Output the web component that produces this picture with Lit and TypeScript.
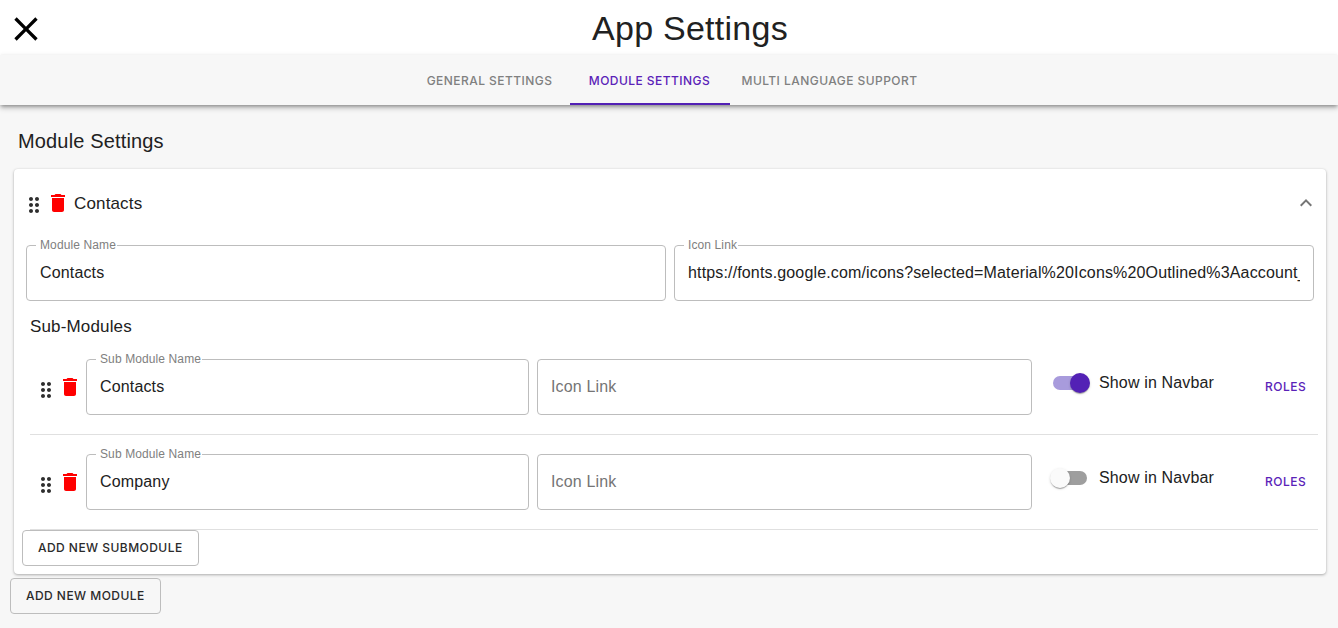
import {html, css, LitElement} from 'lit';
import {customElement, property} from 'lit/decorators.js';

const DRAG = 'M11 18c0 1.1-.9 2-2 2s-2-.9-2-2 .9-2 2-2 2 .9 2 2zm-2-8c-1.1 0-2 .9-2 2s.9 2 2 2 2-.9 2-2-.9-2-2-2zm0-6c-1.1 0-2 .9-2 2s.9 2 2 2 2-.9 2-2-.9-2-2-2zm6 4c1.1 0 2-.9 2-2s-.9-2-2-2-2 .9-2 2 .9 2 2 2zm0 2c-1.1 0-2 .9-2 2s.9 2 2 2 2-.9 2-2-.9-2-2-2zm0 6c-1.1 0-2 .9-2 2s.9 2 2 2 2-.9 2-2-.9-2-2-2z';
const TRASH = 'M6 19c0 1.1.9 2 2 2h8c1.1 0 2-.9 2-2V7H6v12zM19 4h-3.5l-1-1h-5l-1 1H5v2h14V4z';

const icon = (d: string, cls: string) => html`
  <svg class=${cls} viewBox="0 0 24 24" width="24" height="24"><path d=${d}></path></svg>
`;

@customElement('text-field')
export class TextField extends LitElement {
  @property() label = '';
  @property() value = '';
  @property() placeholder = '';

  static styles = css`
    :host {
      display: block;
      position: relative;
      height: 56px;
      box-sizing: border-box;
      border: 1px solid #bdbdbd;
      border-radius: 4px;
      background: #fff;
    }

    input {
      display: block;
      width: 100%;
      height: 100%;
      box-sizing: border-box;
      padding: 0 13px;
      border: none;
      outline: none;
      background: transparent;
      font: 16px 'Liberation Sans', Arial, sans-serif;
      letter-spacing: .15px;
      color: #212121;
    }

    input::placeholder {
      color: #757575;
      opacity: 1;
    }

    label {
      position: absolute;
      left: 9px;
      top: -8px;
      padding: 0 1px 0 4px;
      background: #fff;
      font: 12px/14px 'Liberation Sans', Arial, sans-serif;
      letter-spacing: .11px;
      color: #808080;
    }
  `;

  render() {
    return html`
      ${this.label ? html`<label>${this.label}</label>` : ''}
      <input .value=${this.value} placeholder=${this.placeholder} />
    `;
  }
}

@customElement('app-root')
export class AppRoot extends LitElement {
  static styles = css`
    :host {
      display: block;
      height: 628px;
      overflow: hidden;
      background: #f7f7f7;
      font-family: 'Liberation Sans', Arial, sans-serif;
      color: #212121;
    }

    .top {
      display: flex;
      align-items: center;
      height: 55px;
      padding: 3px 0 0 6px;
      box-sizing: border-box;
      background: #fff;
    }

    .top svg {
      flex: none;
      width: 40px;
      height: 40px;
    }

    .top h1 {
      flex: 1;
      margin: -3px 0 0;
      padding-right: 4px;
      text-align: center;
      font-size: 34px;
      font-weight: 400;
      letter-spacing: .25px;
      line-height: 40px;
    }

    .tabs {
      position: relative;
      display: flex;
      justify-content: center;
      height: 50px;
      padding-left: 1px;
      box-sizing: border-box;
      background: #f7f7f7;
      box-shadow: 0 2px 4px -1px rgba(0,0,0,.4), 0 4px 5px 0 rgba(0,0,0,.14), 0 -1px 4px 0 rgba(0,0,0,.04);
    }

    .tab {
      min-width: 160px;
      padding: 2px 12px 0;
      box-sizing: border-box;
      display: flex;
      align-items: center;
      justify-content: center;
      border-bottom: 2px solid transparent;
      font: 500 12px Inter, sans-serif;
      letter-spacing: .45px;
      color: #808080;
    }

    .tab.active {
      color: #5a22b8;
      border-bottom-color: #5321b5;
    }

    .content {
      padding: 0 12px 0 14px;
    }

    h2 {
      margin: 0;
      padding: 23px 0 15px 4px;
      font-size: 20px;
      font-weight: 400;
      letter-spacing: .15px;
      line-height: 26px;
    }

    .card {
      background: #fff;
      border-radius: 4px;
      box-shadow: 0 1px 3px rgba(0,0,0,.3), 0 0 2px rgba(0,0,0,.05);
      height: 405px;
      padding: 0 8px;
      box-sizing: border-box;
    }

    .card-head {
      display: flex;
      align-items: center;
      height: 68px;
      font-size: 17px;
      letter-spacing: .15px;
    }

    .drag {
      flex: none;
      fill: #2e2e2e;
      margin-top: 4px;
    }

    .sub-row .drag {
      margin-top: 6px;
    }

    .trash {
      flex: none;
      fill: #f00;
    }

    .name {
      flex: 1;
      margin: 1px 0 0 4px;
    }

    .chevron {
      fill: #757575;
    }

    .fields {
      display: grid;
      grid-template-columns: 1fr 1fr;
      gap: 8px;
      margin: 8px 4px 0;
    }

    h3 {
      margin: 0;
      padding: 16px 0 22px 8px;
      font-size: 17px;
      font-weight: 400;
      letter-spacing: .15px;
      line-height: 20px;
    }

    .sub-row {
      display: flex;
      align-items: center;
      height: 56px;
      margin-left: 12px;
    }

    .sub-row text-field:nth-of-type(1) {
      flex: none;
      width: 443px;
      margin-left: 4px;
    }

    .sub-row text-field:nth-of-type(2) {
      flex: none;
      width: 495px;
      margin-left: 8px;
    }

    .divider {
      height: 1px;
      margin: 19px 0 19px 8px;
      background: #e0e0e0;
    }

    .divider.last {
      margin-bottom: 0;
    }

    .switch {
      position: relative;
      flex: none;
      width: 34px;
      height: 14px;
      margin: -8px 0 0 21px;
      border-radius: 7px;
      background: #9e9e9e;
    }

    .switch::after {
      content: '';
      position: absolute;
      left: -3px;
      top: -3px;
      width: 20px;
      height: 20px;
      border-radius: 50%;
      background: #fafafa;
      box-shadow: 0 2px 1px -1px rgba(0,0,0,.2), 0 1px 1px 0 rgba(0,0,0,.14), 0 1px 3px 0 rgba(0,0,0,.12);
    }

    .switch.on {
      background: #a89bdc;
    }

    .switch.on::after {
      left: 17px;
      background: #5321b5;
    }

    .switch-label {
      flex: none;
      width: 115px;
      margin: -9px 0 0 12px;
      font-size: 16px;
      letter-spacing: .15px;
      white-space: nowrap;
    }

    .roles {
      margin: -2px 0 0 51px;
      font: 500 12px Inter, sans-serif;
      letter-spacing: .5px;
      color: #5a22b8;
    }

    .btn {
      display: inline-flex;
      align-items: center;
      justify-content: center;
      height: 36px;
      box-sizing: border-box;
      padding: 0 15px 2px;
      border: 1px solid #bdbdbd;
      border-radius: 4px;
      font: 500 12px Inter, sans-serif;
      letter-spacing: .46px;
      color: #2a2a2a;
      background: transparent;
    }

    .card .btn {
      background: #fff;
    }

    .add-module {
      margin: 4px 0 0 -4px;
    }
  `;

  private renderSub(name: string, on: boolean) {
    return html`
      <div class="sub-row">
        ${icon(DRAG, 'drag')}
        ${icon(TRASH, 'trash')}
        <text-field label="Sub Module Name" value=${name}></text-field>
        <text-field placeholder="Icon Link"></text-field>
        <div class="switch ${on ? 'on' : ''}"></div>
        <div class="switch-label">Show in Navbar</div>
        <div class="roles">ROLES</div>
      </div>
    `;
  }

  render() {
    return html`
      <div class="top">
        <svg viewBox="0 0 24 24"><path d="M19 6.41 17.59 5 12 10.59 6.41 5 5 6.41 10.59 12 5 17.59 6.41 19 12 13.41 17.59 19 19 17.59 13.41 12z"></path></svg>
        <h1>App Settings</h1>
      </div>
      <div class="tabs">
        <div class="tab">GENERAL SETTINGS</div>
        <div class="tab active">MODULE SETTINGS</div>
        <div class="tab">MULTI LANGUAGE SUPPORT</div>
      </div>
      <div class="content">
        <h2>Module Settings</h2>
        <div class="card">
          <div class="card-head">
            ${icon(DRAG, 'drag')}
            ${icon(TRASH, 'trash')}
            <span class="name">Contacts</span>
            ${icon('M12 8l-6 6 1.41 1.41L12 10.83l4.59 4.58L18 14z', 'chevron')}
          </div>
          <div class="fields">
            <text-field label="Module Name" value="Contacts"></text-field>
            <text-field label="Icon Link" value="https://fonts.google.com/icons?selected=Material%20Icons%20Outlined%3Aaccount_circle%3A"></text-field>
          </div>
          <h3>Sub-Modules</h3>
          ${this.renderSub('Contacts', true)}
          <div class="divider"></div>
          ${this.renderSub('Company', false)}
          <div class="divider last"></div>
          <button class="btn">ADD NEW SUBMODULE</button>
        </div>
        <button class="btn add-module">ADD NEW MODULE</button>
      </div>
    `;
  }
}
